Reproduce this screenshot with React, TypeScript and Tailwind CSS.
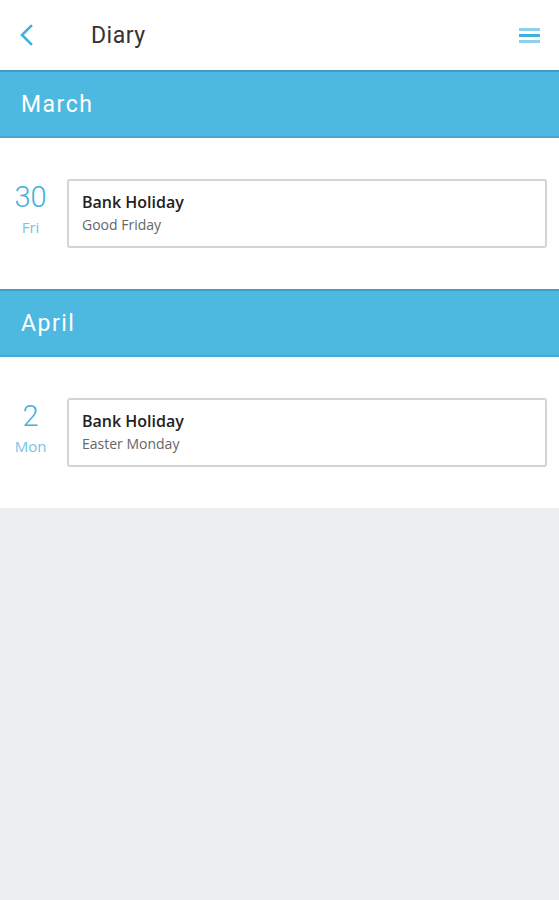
import React from "react";

type Item = { day: string; dow: string; title: string; sub: string };
const sections: { month: string; items: Item[] }[] = [
  { month: "March", items: [{ day: "30", dow: "Fri", title: "Bank Holiday", sub: "Good Friday" }] },
  { month: "April", items: [{ day: "2", dow: "Mon", title: "Bank Holiday", sub: "Easter Monday" }] },
];

export default function App() {
  return (
    <div className="min-h-[900px] w-[559px] bg-[#eceef0]" style={{ fontFamily: "Roboto, sans-serif" }}>
      <div className="h-[70px] bg-white flex items-center">
        <div className="w-[91px] pl-[19px] flex items-center">
          <svg width="16" height="24" viewBox="0 0 16 24">
            <path d="M12 3 L3 12 L12 21" fill="none" stroke="#3fb1dc" strokeWidth="2.6" strokeLinecap="square" />
          </svg>
        </div>
        <div className="text-[23px] text-[#333] tracking-[0.5px] mt-[3px]">Diary</div>
        <div className="ml-auto mr-[19px] flex flex-col gap-[3px] w-[21px]">
          <div className="h-[3px] bg-[#8ed0ea]" />
          <div className="h-[3px] bg-[#3fb1dc]" />
          <div className="h-[3px] bg-[#8ed0ea]" />
        </div>
      </div>
      {sections.map((s) => (
        <div key={s.month}>
          <div className="h-[68px] bg-[#4db9e1] border-t-[2px] border-t-[#3d9fc7] border-b-[2px] border-b-[#45a9d1] flex items-center pl-[21px] shadow-[0_1px_1px_rgba(0,0,0,0.08)]">
            <span className="text-[23px] text-white tracking-[1.5px] mt-[2px]">{s.month}</span>
          </div>
          <div className="bg-white pt-[41px] pb-[41px]">
            {s.items.map((it, i) => (
              <div key={i} className="flex items-center">
                <div className="w-[67px] shrink-0 flex flex-col items-center -mt-[10px] pr-[6px]">
                  <div className="text-[29px] leading-[32px] text-[#3fb1dc] font-light">{it.day}</div>
                  <div className="text-[15px] leading-[20px] mt-[4px] text-[#74c4e4]" style={{ fontFamily: "'Open Sans', sans-serif" }}>{it.dow}</div>
                </div>
                <div
                  className="w-[480px] h-[69px] border-2 border-[#d4d4d4] rounded-[3px] bg-white pl-[13px] flex flex-col justify-center"
                  style={{ fontFamily: "'Open Sans', sans-serif" }}
                >
                  <div className="text-[16px] leading-[22px] font-semibold text-[#222] -mt-[2px]">{it.title}</div>
                  <div className="text-[14px] leading-[20px] text-[#666] mt-[2px]">{it.sub}</div>
                </div>
              </div>
            ))}
          </div>
        </div>
      ))}
    </div>
  );
}
